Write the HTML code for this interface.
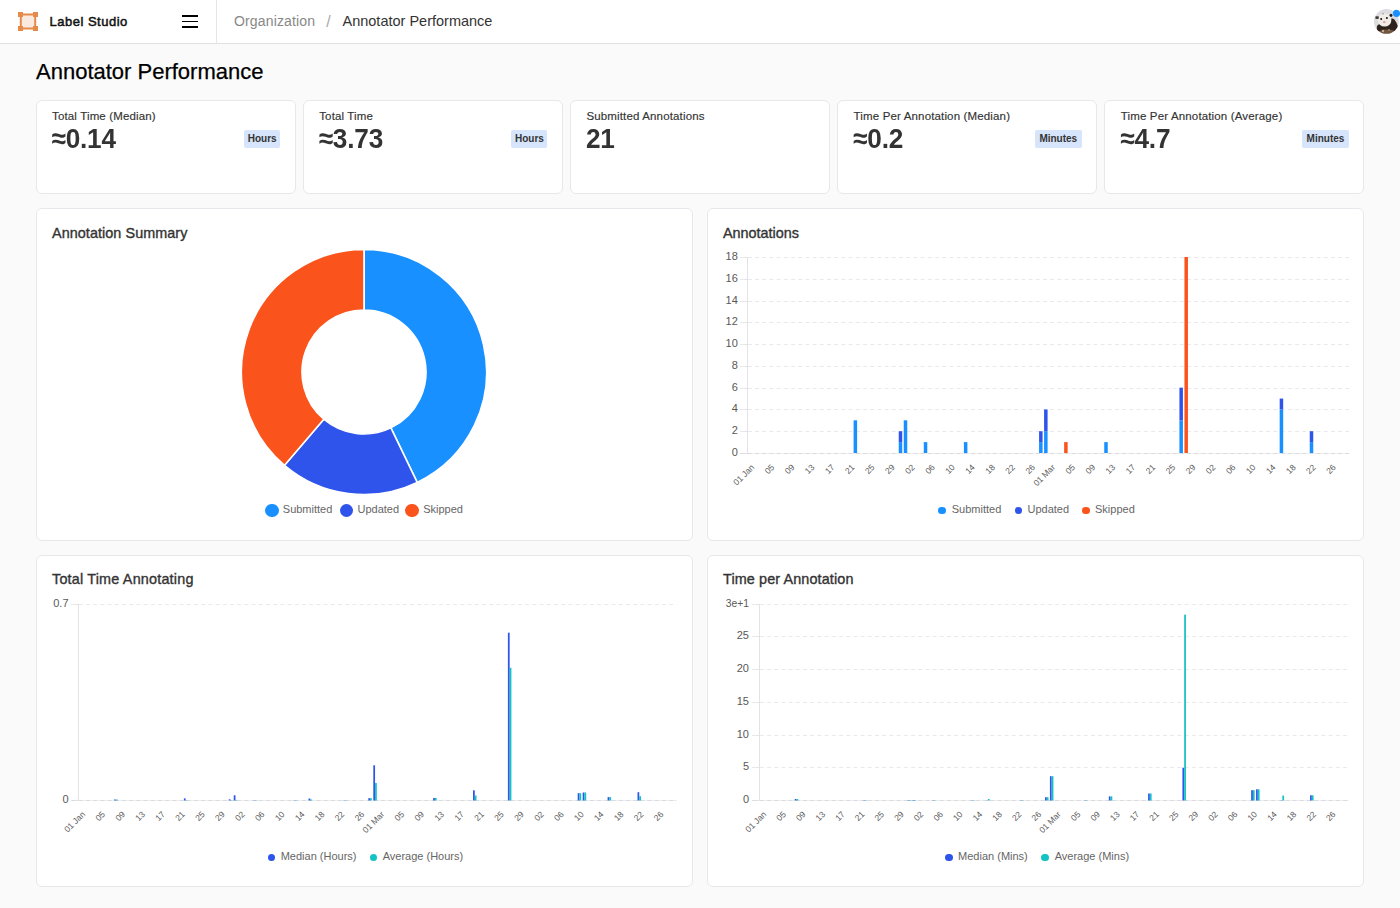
<!DOCTYPE html>
<html><head><meta charset="utf-8">
<style>
*{box-sizing:border-box}
html,body{margin:0;padding:0}
body{width:1400px;height:908px;overflow:hidden;background:#fafafa;font-family:"Liberation Sans",sans-serif;position:relative;color:#333}
.abs{position:absolute;white-space:nowrap}
#hdr{position:absolute;left:0;top:0;width:1400px;height:44px;background:#fff;border-bottom:1px solid #e1e1e1}
#sep{position:absolute;left:216px;top:0;width:1px;height:43px;background:#e6e6e6}
.card{position:absolute;background:#fff;border:1px solid #e8e8ec;border-radius:6px}
.stl{font-size:11.5px;letter-spacing:0.15px;color:#333;line-height:14px;-webkit-text-stroke:0.15px #333}
.sval{font-size:26.2px;font-weight:700;color:#333;line-height:30px;letter-spacing:-0.2px;transform:scaleY(1.07);transform-origin:0 24.1px}
.badge{position:absolute;height:18px;background:#d6e4fc;border-radius:2px;font-size:10px;font-weight:700;color:#333;line-height:18px;text-align:center}
.ctitle{font-size:14.4px;font-weight:400;color:#333;line-height:16px;-webkit-text-stroke:0.35px #333}
.leg{font-size:11px;color:#666;line-height:13px}
svg{position:absolute;left:0;top:0;overflow:visible}
</style></head>
<body>
<div id="hdr">
  <svg width="22" height="22" style="left:17px;top:11px" viewBox="0 0 22 22">
    <rect x="3.8" y="3.5" width="14.4" height="14" fill="#f9e9de" stroke="#e68a4a" stroke-width="2"/>
    <rect x="1" y="1" width="5" height="5" fill="#e68a4a"/>
    <rect x="16" y="1" width="5" height="5" fill="#e68a4a"/>
    <rect x="1" y="15" width="5" height="5" fill="#e68a4a"/>
    <rect x="16" y="15" width="5" height="5" fill="#e68a4a"/>
  </svg>
  <div class="abs" style="left:49.5px;top:14px;font-size:13px;letter-spacing:0.5px;font-weight:400;color:#111;line-height:16px;-webkit-text-stroke:0.5px #111">Label Studio</div>
  <div class="abs" style="left:182px;top:15px;width:16px;height:2px;background:#000"></div>
  <div class="abs" style="left:182px;top:21px;width:16px;height:1px;background:#000"></div>
  <div class="abs" style="left:182px;top:26px;width:16px;height:2px;background:#000"></div>
  <div id="sep"></div>
  <div class="abs" style="left:234px;top:13px;font-size:14px;letter-spacing:0.15px;color:#888;line-height:16px">Organization</div>
  <div class="abs" style="left:326.2px;top:13.3px;font-size:16px;color:#aaa;line-height:18px">/</div>
  <div class="abs" style="left:342.5px;top:13px;font-size:14.5px;color:#333;line-height:16px">Annotator Performance</div>
  <svg width="26" height="26" style="left:1374px;top:9px" viewBox="0 0 26 26">
    <defs><clipPath id="avc"><circle cx="12.4" cy="12.45" r="12.4"/></clipPath>
    <filter id="blr" x="-20%" y="-20%" width="140%" height="140%"><feGaussianBlur stdDeviation="0.45"/></filter></defs>
    <g clip-path="url(#avc)">
      <rect x="0" y="0" width="26" height="26" fill="#dcdce1"/>
      <g filter="url(#blr)">
      <path d="M3,17 C6,13 14,13 17,10 C20,8 23,14 24,18 L24,26 L2,26 Z" fill="#2e231c"/>
      <ellipse cx="13" cy="23.5" rx="9" ry="3" fill="#6e5640"/>
      <circle cx="9" cy="22" r="1.2" fill="#c9a98a"/>
      <circle cx="15" cy="21" r="0.9" fill="#a8876a"/>
      <ellipse cx="10.6" cy="11" rx="6.8" ry="6.6" fill="#f0ede6"/>
      <rect x="1.5" y="7.3" width="3.2" height="2.6" fill="#3a3838"/>
      <ellipse cx="17" cy="6.3" rx="1.4" ry="1.6" fill="#1c1a1a"/>
      <circle cx="9" cy="4.8" r="0.6" fill="#5a4a3e"/>
      <circle cx="7.2" cy="10.1" r="1" fill="#1a1010"/>
      <circle cx="12.9" cy="9" r="1" fill="#1a1010"/>
      <ellipse cx="10.3" cy="13.2" rx="1.4" ry="1.1" fill="#e2a3a8"/>
      </g>
    </g>
    <circle cx="22.5" cy="4.3" r="3.6" fill="#1890ff"/>
  </svg>
</div>

<div class="abs" style="left:36px;top:59px;font-size:22px;color:#000;line-height:26px;-webkit-text-stroke:0.25px #000">Annotator Performance</div>

<!-- stat cards -->
<div class="card" style="left:36px;top:100px;width:260px;height:94px"></div>
<div class="card" style="left:303px;top:100px;width:260px;height:94px"></div>
<div class="card" style="left:570px;top:100px;width:260px;height:94px"></div>
<div class="card" style="left:837px;top:100px;width:260px;height:94px"></div>
<div class="card" style="left:1104px;top:100px;width:260px;height:94px"></div>

<!-- stat content -->
<div class="abs stl" style="left:52.0px;top:109px">Total Time (Median)</div>
<div class="abs sval" style="left:51.5px;top:124px">≈0.14</div>
<div class="badge" style="left:244.2px;top:130px;width:36px">Hours</div>
<div class="abs stl" style="left:319.2px;top:109px">Total Time</div>
<div class="abs sval" style="left:318.7px;top:124px">≈3.73</div>
<div class="badge" style="left:511.4px;top:130px;width:36px">Hours</div>
<div class="abs stl" style="left:586.4px;top:109px">Submitted Annotations</div>
<div class="abs sval" style="left:585.9px;top:124px">21</div>
<div class="abs stl" style="left:853.6px;top:109px">Time Per Annotation (Median)</div>
<div class="abs sval" style="left:853.1px;top:124px">≈0.2</div>
<div class="badge" style="left:1034.8px;top:130px;width:47px">Minutes</div>
<div class="abs stl" style="left:1120.8px;top:109px">Time Per Annotation (Average)</div>
<div class="abs sval" style="left:1120.3px;top:124px">≈4.7</div>
<div class="badge" style="left:1302.0px;top:130px;width:47px">Minutes</div>

<!-- chart cards -->
<div class="card" style="left:36px;top:208px;width:657px;height:333px"></div>
<div class="card" style="left:707px;top:208px;width:657px;height:333px"></div>
<div class="card" style="left:36px;top:555px;width:657px;height:332px"></div>
<div class="card" style="left:707px;top:555px;width:657px;height:332px"></div>

<!-- chart titles/legends -->
<div class="abs ctitle" style="left:52px;top:225px;letter-spacing:0.06px">Annotation Summary</div>
<div class="abs ctitle" style="left:723px;top:225px">Annotations</div>
<div class="abs ctitle" style="left:52px;top:571px;letter-spacing:0.19px">Total Time Annotating</div>
<div class="abs ctitle" style="left:723px;top:571px;letter-spacing:0.12px">Time per Annotation</div>

<div class="abs" style="left:265.2px;top:503.5px;width:13.5px;height:13.5px;border-radius:50%;background:#1890ff"></div>
<div class="abs leg" style="left:282.8px;top:503px">Submitted</div>
<div class="abs" style="left:339.7px;top:503.5px;width:13.5px;height:13.5px;border-radius:50%;background:#2f54eb"></div>
<div class="abs leg" style="left:357.5px;top:503px">Updated</div>
<div class="abs" style="left:405.4px;top:503.5px;width:13.5px;height:13.5px;border-radius:50%;background:#fa541c"></div>
<div class="abs leg" style="left:423.2px;top:503px">Skipped</div>

<div class="abs" style="left:938.25px;top:506.5px;width:7.5px;height:7.5px;border-radius:50%;background:#1890ff"></div>
<div class="abs leg" style="left:951.75px;top:503px">Submitted</div>
<div class="abs" style="left:1014.75px;top:506.5px;width:7.5px;height:7.5px;border-radius:50%;background:#2f54eb"></div>
<div class="abs leg" style="left:1027.5px;top:503px">Updated</div>
<div class="abs" style="left:1082.25px;top:506.5px;width:7.5px;height:7.5px;border-radius:50%;background:#fa541c"></div>
<div class="abs leg" style="left:1095px;top:503px">Skipped</div>

<div class="abs" style="left:267.5px;top:853.7px;width:7.5px;height:7.5px;border-radius:50%;background:#2f54eb"></div>
<div class="abs leg" style="left:280.7px;top:850px">Median (Hours)</div>
<div class="abs" style="left:369.5px;top:853.7px;width:7.5px;height:7.5px;border-radius:50%;background:#13c2c2"></div>
<div class="abs leg" style="left:382.7px;top:850px">Average (Hours)</div>

<div class="abs" style="left:945px;top:853.8px;width:7.5px;height:7.5px;border-radius:50%;background:#2f54eb"></div>
<div class="abs leg" style="left:958.1px;top:850px">Median (Mins)</div>
<div class="abs" style="left:1041.4px;top:853.8px;width:7.5px;height:7.5px;border-radius:50%;background:#13c2c2"></div>
<div class="abs leg" style="left:1054.7px;top:850px">Average (Mins)</div>

<!-- CHARTS -->
<svg width="1400" height="908" viewBox="0 0 1400 908" style="left:0;top:0;font-family:'Liberation Sans',sans-serif">
<path d="M364.00,249.40 A122.6,122.6 0 0 1 417.19,482.46 L390.90,427.86 A62.0,62.0 0 0 0 364.00,310.00 Z" fill="#1890ff" stroke="#fff" stroke-width="1.6" stroke-linejoin="round"/>
<path d="M417.19,482.46 A122.6,122.6 0 0 1 284.53,465.35 L323.81,419.21 A62.0,62.0 0 0 0 390.90,427.86 Z" fill="#2f54eb" stroke="#fff" stroke-width="1.6" stroke-linejoin="round"/>
<path d="M284.53,465.35 A122.6,122.6 0 0 1 364.00,249.40 L364.00,310.00 A62.0,62.0 0 0 0 323.81,419.21 Z" fill="#fa541c" stroke="#fff" stroke-width="1.6" stroke-linejoin="round"/>
<line x1="740" y1="453.5" x2="747" y2="453.5" stroke="#e3e3e7" stroke-width="1"/>
<line x1="747" y1="453.5" x2="1349.1" y2="453.5" stroke="#eeeef1" stroke-width="1"/>
<line x1="740.6" y1="453.5" x2="1349.1" y2="453.5" stroke="#dbdbdf" stroke-width="1" stroke-dasharray="4 3.2"/>
<text x="737.8" y="456.2" text-anchor="end" font-size="11" fill="#595959">0</text>
<line x1="740" y1="431.5" x2="747" y2="431.5" stroke="#e3e3e7" stroke-width="1"/>
<line x1="740.6" y1="431.5" x2="1349.1" y2="431.5" stroke="#e9e9ed" stroke-width="1" stroke-dasharray="4 3.2"/>
<text x="737.8" y="434.2" text-anchor="end" font-size="11" fill="#595959">2</text>
<line x1="740" y1="409.5" x2="747" y2="409.5" stroke="#e3e3e7" stroke-width="1"/>
<line x1="740.6" y1="409.5" x2="1349.1" y2="409.5" stroke="#e9e9ed" stroke-width="1" stroke-dasharray="4 3.2"/>
<text x="737.8" y="412.2" text-anchor="end" font-size="11" fill="#595959">4</text>
<line x1="740" y1="388.5" x2="747" y2="388.5" stroke="#e3e3e7" stroke-width="1"/>
<line x1="740.6" y1="388.5" x2="1349.1" y2="388.5" stroke="#e9e9ed" stroke-width="1" stroke-dasharray="4 3.2"/>
<text x="737.8" y="391.2" text-anchor="end" font-size="11" fill="#595959">6</text>
<line x1="740" y1="366.5" x2="747" y2="366.5" stroke="#e3e3e7" stroke-width="1"/>
<line x1="740.6" y1="366.5" x2="1349.1" y2="366.5" stroke="#e9e9ed" stroke-width="1" stroke-dasharray="4 3.2"/>
<text x="737.8" y="369.2" text-anchor="end" font-size="11" fill="#595959">8</text>
<line x1="740" y1="344.5" x2="747" y2="344.5" stroke="#e3e3e7" stroke-width="1"/>
<line x1="740.6" y1="344.5" x2="1349.1" y2="344.5" stroke="#e9e9ed" stroke-width="1" stroke-dasharray="4 3.2"/>
<text x="737.8" y="347.2" text-anchor="end" font-size="11" fill="#595959">10</text>
<line x1="740" y1="322.5" x2="747" y2="322.5" stroke="#e3e3e7" stroke-width="1"/>
<line x1="740.6" y1="322.5" x2="1349.1" y2="322.5" stroke="#e9e9ed" stroke-width="1" stroke-dasharray="4 3.2"/>
<text x="737.8" y="325.2" text-anchor="end" font-size="11" fill="#595959">12</text>
<line x1="740" y1="301.5" x2="747" y2="301.5" stroke="#e3e3e7" stroke-width="1"/>
<line x1="740.6" y1="301.5" x2="1349.1" y2="301.5" stroke="#e9e9ed" stroke-width="1" stroke-dasharray="4 3.2"/>
<text x="737.8" y="304.2" text-anchor="end" font-size="11" fill="#595959">14</text>
<line x1="740" y1="279.5" x2="747" y2="279.5" stroke="#e3e3e7" stroke-width="1"/>
<line x1="740.6" y1="279.5" x2="1349.1" y2="279.5" stroke="#e9e9ed" stroke-width="1" stroke-dasharray="4 3.2"/>
<text x="737.8" y="282.2" text-anchor="end" font-size="11" fill="#595959">16</text>
<line x1="740" y1="257.5" x2="747" y2="257.5" stroke="#e3e3e7" stroke-width="1"/>
<line x1="740.6" y1="257.5" x2="1349.1" y2="257.5" stroke="#e9e9ed" stroke-width="1" stroke-dasharray="4 3.2"/>
<text x="737.8" y="260.2" text-anchor="end" font-size="11" fill="#595959">18</text>
<line x1="747.5" y1="257" x2="747.5" y2="454" stroke="#e3e3e7" stroke-width="1"/>
<rect x="853.61" y="420.33" width="3.5" height="32.67" fill="#1890ff"/>
<rect x="898.73" y="442.11" width="3.5" height="10.89" fill="#1890ff"/>
<rect x="898.73" y="431.22" width="3.5" height="10.89" fill="#2f54eb"/>
<rect x="903.74" y="420.33" width="3.5" height="32.67" fill="#1890ff"/>
<rect x="923.79" y="442.11" width="3.5" height="10.89" fill="#1890ff"/>
<rect x="963.89" y="442.11" width="3.5" height="10.89" fill="#1890ff"/>
<rect x="1039.08" y="442.11" width="3.5" height="10.89" fill="#1890ff"/>
<rect x="1039.08" y="431.22" width="3.5" height="10.89" fill="#2f54eb"/>
<rect x="1044.09" y="431.22" width="3.5" height="21.78" fill="#1890ff"/>
<rect x="1044.09" y="409.44" width="3.5" height="21.78" fill="#2f54eb"/>
<rect x="1064.14" y="442.11" width="3.5" height="10.89" fill="#fa541c"/>
<rect x="1104.24" y="442.11" width="3.5" height="10.89" fill="#1890ff"/>
<rect x="1179.42" y="420.33" width="3.5" height="32.67" fill="#1890ff"/>
<rect x="1179.42" y="387.67" width="3.5" height="32.67" fill="#2f54eb"/>
<rect x="1184.44" y="257.00" width="3.5" height="196.00" fill="#fa541c"/>
<rect x="1279.68" y="409.44" width="3.5" height="43.56" fill="#1890ff"/>
<rect x="1279.68" y="398.56" width="3.5" height="10.89" fill="#2f54eb"/>
<rect x="1309.75" y="442.11" width="3.5" height="10.89" fill="#1890ff"/>
<rect x="1309.75" y="431.22" width="3.5" height="10.89" fill="#2f54eb"/>
<text x="754.90" y="467.80" text-anchor="end" font-size="8.5" fill="#595959" transform="rotate(-45 754.90 467.80)">01 Jan</text>
<text x="774.95" y="467.80" text-anchor="end" font-size="8.5" fill="#595959" transform="rotate(-45 774.95 467.80)">05</text>
<text x="795.00" y="467.80" text-anchor="end" font-size="8.5" fill="#595959" transform="rotate(-45 795.00 467.80)">09</text>
<text x="815.05" y="467.80" text-anchor="end" font-size="8.5" fill="#595959" transform="rotate(-45 815.05 467.80)">13</text>
<text x="835.10" y="467.80" text-anchor="end" font-size="8.5" fill="#595959" transform="rotate(-45 835.10 467.80)">17</text>
<text x="855.15" y="467.80" text-anchor="end" font-size="8.5" fill="#595959" transform="rotate(-45 855.15 467.80)">21</text>
<text x="875.20" y="467.80" text-anchor="end" font-size="8.5" fill="#595959" transform="rotate(-45 875.20 467.80)">25</text>
<text x="895.25" y="467.80" text-anchor="end" font-size="8.5" fill="#595959" transform="rotate(-45 895.25 467.80)">29</text>
<text x="915.30" y="467.80" text-anchor="end" font-size="8.5" fill="#595959" transform="rotate(-45 915.30 467.80)">02</text>
<text x="935.35" y="467.80" text-anchor="end" font-size="8.5" fill="#595959" transform="rotate(-45 935.35 467.80)">06</text>
<text x="955.40" y="467.80" text-anchor="end" font-size="8.5" fill="#595959" transform="rotate(-45 955.40 467.80)">10</text>
<text x="975.45" y="467.80" text-anchor="end" font-size="8.5" fill="#595959" transform="rotate(-45 975.45 467.80)">14</text>
<text x="995.50" y="467.80" text-anchor="end" font-size="8.5" fill="#595959" transform="rotate(-45 995.50 467.80)">18</text>
<text x="1015.55" y="467.80" text-anchor="end" font-size="8.5" fill="#595959" transform="rotate(-45 1015.55 467.80)">22</text>
<text x="1035.60" y="467.80" text-anchor="end" font-size="8.5" fill="#595959" transform="rotate(-45 1035.60 467.80)">26</text>
<text x="1055.65" y="467.80" text-anchor="end" font-size="8.5" fill="#595959" transform="rotate(-45 1055.65 467.80)">01 Mar</text>
<text x="1075.70" y="467.80" text-anchor="end" font-size="8.5" fill="#595959" transform="rotate(-45 1075.70 467.80)">05</text>
<text x="1095.75" y="467.80" text-anchor="end" font-size="8.5" fill="#595959" transform="rotate(-45 1095.75 467.80)">09</text>
<text x="1115.80" y="467.80" text-anchor="end" font-size="8.5" fill="#595959" transform="rotate(-45 1115.80 467.80)">13</text>
<text x="1135.85" y="467.80" text-anchor="end" font-size="8.5" fill="#595959" transform="rotate(-45 1135.85 467.80)">17</text>
<text x="1155.90" y="467.80" text-anchor="end" font-size="8.5" fill="#595959" transform="rotate(-45 1155.90 467.80)">21</text>
<text x="1175.95" y="467.80" text-anchor="end" font-size="8.5" fill="#595959" transform="rotate(-45 1175.95 467.80)">25</text>
<text x="1196.00" y="467.80" text-anchor="end" font-size="8.5" fill="#595959" transform="rotate(-45 1196.00 467.80)">29</text>
<text x="1216.05" y="467.80" text-anchor="end" font-size="8.5" fill="#595959" transform="rotate(-45 1216.05 467.80)">02</text>
<text x="1236.10" y="467.80" text-anchor="end" font-size="8.5" fill="#595959" transform="rotate(-45 1236.10 467.80)">06</text>
<text x="1256.15" y="467.80" text-anchor="end" font-size="8.5" fill="#595959" transform="rotate(-45 1256.15 467.80)">10</text>
<text x="1276.20" y="467.80" text-anchor="end" font-size="8.5" fill="#595959" transform="rotate(-45 1276.20 467.80)">14</text>
<text x="1296.25" y="467.80" text-anchor="end" font-size="8.5" fill="#595959" transform="rotate(-45 1296.25 467.80)">18</text>
<text x="1316.30" y="467.80" text-anchor="end" font-size="8.5" fill="#595959" transform="rotate(-45 1316.30 467.80)">22</text>
<text x="1336.35" y="467.80" text-anchor="end" font-size="8.5" fill="#595959" transform="rotate(-45 1336.35 467.80)">26</text>
<line x1="71" y1="800.5" x2="78" y2="800.5" stroke="#e3e3e7" stroke-width="1"/>
<line x1="78" y1="800.5" x2="676.7" y2="800.5" stroke="#eeeef1" stroke-width="1"/>
<line x1="71.6" y1="800.5" x2="676.7" y2="800.5" stroke="#dbdbdf" stroke-width="1" stroke-dasharray="4 3.2"/>
<text x="68.5" y="803.2" text-anchor="end" font-size="11" fill="#595959">0</text>
<line x1="71" y1="604.5" x2="78" y2="604.5" stroke="#e3e3e7" stroke-width="1"/>
<line x1="71.6" y1="604.5" x2="676.7" y2="604.5" stroke="#e9e9ed" stroke-width="1" stroke-dasharray="4 3.2"/>
<text x="68.5" y="607.2" text-anchor="end" font-size="11" fill="#595959">0.7</text>
<line x1="78.5" y1="604" x2="78.5" y2="801" stroke="#e3e3e7" stroke-width="1"/>
<rect x="114.09" y="799.50" width="1.75" height="1.00" fill="#2f54eb"/>
<rect x="115.84" y="799.50" width="1.75" height="1.00" fill="#13c2c2"/>
<rect x="183.88" y="798.40" width="1.75" height="2.10" fill="#2f54eb"/>
<rect x="185.63" y="800.10" width="1.75" height="0.40" fill="#13c2c2"/>
<rect x="228.74" y="799.30" width="1.75" height="1.20" fill="#2f54eb"/>
<rect x="230.49" y="800.20" width="1.75" height="0.30" fill="#13c2c2"/>
<rect x="233.73" y="795.30" width="1.75" height="5.20" fill="#2f54eb"/>
<rect x="235.48" y="799.90" width="1.75" height="0.60" fill="#13c2c2"/>
<rect x="253.67" y="800.20" width="1.75" height="0.30" fill="#2f54eb"/>
<rect x="255.42" y="800.20" width="1.75" height="0.30" fill="#13c2c2"/>
<rect x="293.55" y="800.20" width="1.75" height="0.30" fill="#2f54eb"/>
<rect x="295.30" y="800.20" width="1.75" height="0.30" fill="#13c2c2"/>
<rect x="308.50" y="798.50" width="1.75" height="2.00" fill="#2f54eb"/>
<rect x="310.25" y="799.50" width="1.75" height="1.00" fill="#13c2c2"/>
<rect x="343.40" y="800.20" width="1.75" height="0.30" fill="#2f54eb"/>
<rect x="345.15" y="800.20" width="1.75" height="0.30" fill="#13c2c2"/>
<rect x="368.32" y="798.20" width="1.75" height="2.30" fill="#2f54eb"/>
<rect x="370.07" y="798.20" width="1.75" height="2.30" fill="#13c2c2"/>
<rect x="373.31" y="765.30" width="1.75" height="35.20" fill="#2f54eb"/>
<rect x="375.06" y="783.00" width="1.75" height="17.50" fill="#13c2c2"/>
<rect x="433.13" y="798.00" width="1.75" height="2.50" fill="#2f54eb"/>
<rect x="434.88" y="798.00" width="1.75" height="2.50" fill="#13c2c2"/>
<rect x="473.01" y="790.30" width="1.75" height="10.20" fill="#2f54eb"/>
<rect x="474.76" y="795.50" width="1.75" height="5.00" fill="#13c2c2"/>
<rect x="507.90" y="632.70" width="1.75" height="167.80" fill="#2f54eb"/>
<rect x="509.65" y="667.80" width="1.75" height="132.70" fill="#13c2c2"/>
<rect x="577.69" y="793.20" width="1.75" height="7.30" fill="#2f54eb"/>
<rect x="579.44" y="793.20" width="1.75" height="7.30" fill="#13c2c2"/>
<rect x="582.68" y="792.50" width="1.75" height="8.00" fill="#2f54eb"/>
<rect x="584.43" y="792.50" width="1.75" height="8.00" fill="#13c2c2"/>
<rect x="607.60" y="797.10" width="1.75" height="3.40" fill="#2f54eb"/>
<rect x="609.35" y="797.10" width="1.75" height="3.40" fill="#13c2c2"/>
<rect x="637.51" y="792.20" width="1.75" height="8.30" fill="#2f54eb"/>
<rect x="639.26" y="796.20" width="1.75" height="4.30" fill="#13c2c2"/>
<text x="85.74" y="814.80" text-anchor="end" font-size="8.5" fill="#595959" transform="rotate(-45 85.74 814.80)">01 Jan</text>
<text x="105.68" y="814.80" text-anchor="end" font-size="8.5" fill="#595959" transform="rotate(-45 105.68 814.80)">05</text>
<text x="125.62" y="814.80" text-anchor="end" font-size="8.5" fill="#595959" transform="rotate(-45 125.62 814.80)">09</text>
<text x="145.56" y="814.80" text-anchor="end" font-size="8.5" fill="#595959" transform="rotate(-45 145.56 814.80)">13</text>
<text x="165.50" y="814.80" text-anchor="end" font-size="8.5" fill="#595959" transform="rotate(-45 165.50 814.80)">17</text>
<text x="185.44" y="814.80" text-anchor="end" font-size="8.5" fill="#595959" transform="rotate(-45 185.44 814.80)">21</text>
<text x="205.38" y="814.80" text-anchor="end" font-size="8.5" fill="#595959" transform="rotate(-45 205.38 814.80)">25</text>
<text x="225.32" y="814.80" text-anchor="end" font-size="8.5" fill="#595959" transform="rotate(-45 225.32 814.80)">29</text>
<text x="245.26" y="814.80" text-anchor="end" font-size="8.5" fill="#595959" transform="rotate(-45 245.26 814.80)">02</text>
<text x="265.20" y="814.80" text-anchor="end" font-size="8.5" fill="#595959" transform="rotate(-45 265.20 814.80)">06</text>
<text x="285.14" y="814.80" text-anchor="end" font-size="8.5" fill="#595959" transform="rotate(-45 285.14 814.80)">10</text>
<text x="305.08" y="814.80" text-anchor="end" font-size="8.5" fill="#595959" transform="rotate(-45 305.08 814.80)">14</text>
<text x="325.02" y="814.80" text-anchor="end" font-size="8.5" fill="#595959" transform="rotate(-45 325.02 814.80)">18</text>
<text x="344.96" y="814.80" text-anchor="end" font-size="8.5" fill="#595959" transform="rotate(-45 344.96 814.80)">22</text>
<text x="364.90" y="814.80" text-anchor="end" font-size="8.5" fill="#595959" transform="rotate(-45 364.90 814.80)">26</text>
<text x="384.84" y="814.80" text-anchor="end" font-size="8.5" fill="#595959" transform="rotate(-45 384.84 814.80)">01 Mar</text>
<text x="404.78" y="814.80" text-anchor="end" font-size="8.5" fill="#595959" transform="rotate(-45 404.78 814.80)">05</text>
<text x="424.72" y="814.80" text-anchor="end" font-size="8.5" fill="#595959" transform="rotate(-45 424.72 814.80)">09</text>
<text x="444.66" y="814.80" text-anchor="end" font-size="8.5" fill="#595959" transform="rotate(-45 444.66 814.80)">13</text>
<text x="464.60" y="814.80" text-anchor="end" font-size="8.5" fill="#595959" transform="rotate(-45 464.60 814.80)">17</text>
<text x="484.54" y="814.80" text-anchor="end" font-size="8.5" fill="#595959" transform="rotate(-45 484.54 814.80)">21</text>
<text x="504.48" y="814.80" text-anchor="end" font-size="8.5" fill="#595959" transform="rotate(-45 504.48 814.80)">25</text>
<text x="524.42" y="814.80" text-anchor="end" font-size="8.5" fill="#595959" transform="rotate(-45 524.42 814.80)">29</text>
<text x="544.36" y="814.80" text-anchor="end" font-size="8.5" fill="#595959" transform="rotate(-45 544.36 814.80)">02</text>
<text x="564.30" y="814.80" text-anchor="end" font-size="8.5" fill="#595959" transform="rotate(-45 564.30 814.80)">06</text>
<text x="584.24" y="814.80" text-anchor="end" font-size="8.5" fill="#595959" transform="rotate(-45 584.24 814.80)">10</text>
<text x="604.18" y="814.80" text-anchor="end" font-size="8.5" fill="#595959" transform="rotate(-45 604.18 814.80)">14</text>
<text x="624.12" y="814.80" text-anchor="end" font-size="8.5" fill="#595959" transform="rotate(-45 624.12 814.80)">18</text>
<text x="644.06" y="814.80" text-anchor="end" font-size="8.5" fill="#595959" transform="rotate(-45 644.06 814.80)">22</text>
<text x="664.00" y="814.80" text-anchor="end" font-size="8.5" fill="#595959" transform="rotate(-45 664.00 814.80)">26</text>
<line x1="752" y1="800.5" x2="759" y2="800.5" stroke="#e3e3e7" stroke-width="1"/>
<line x1="759" y1="800.5" x2="1348.6" y2="800.5" stroke="#eeeef1" stroke-width="1"/>
<line x1="752.6" y1="800.5" x2="1348.6" y2="800.5" stroke="#dbdbdf" stroke-width="1" stroke-dasharray="4 3.2"/>
<text x="749" y="803.2" text-anchor="end" font-size="11" fill="#595959">0</text>
<line x1="752" y1="767.5" x2="759" y2="767.5" stroke="#e3e3e7" stroke-width="1"/>
<line x1="752.6" y1="767.5" x2="1348.6" y2="767.5" stroke="#e9e9ed" stroke-width="1" stroke-dasharray="4 3.2"/>
<text x="749" y="770.2" text-anchor="end" font-size="11" fill="#595959">5</text>
<line x1="752" y1="735.5" x2="759" y2="735.5" stroke="#e3e3e7" stroke-width="1"/>
<line x1="752.6" y1="735.5" x2="1348.6" y2="735.5" stroke="#e9e9ed" stroke-width="1" stroke-dasharray="4 3.2"/>
<text x="749" y="738.2" text-anchor="end" font-size="11" fill="#595959">10</text>
<line x1="752" y1="702.5" x2="759" y2="702.5" stroke="#e3e3e7" stroke-width="1"/>
<line x1="752.6" y1="702.5" x2="1348.6" y2="702.5" stroke="#e9e9ed" stroke-width="1" stroke-dasharray="4 3.2"/>
<text x="749" y="705.2" text-anchor="end" font-size="11" fill="#595959">15</text>
<line x1="752" y1="669.5" x2="759" y2="669.5" stroke="#e3e3e7" stroke-width="1"/>
<line x1="752.6" y1="669.5" x2="1348.6" y2="669.5" stroke="#e9e9ed" stroke-width="1" stroke-dasharray="4 3.2"/>
<text x="749" y="672.2" text-anchor="end" font-size="11" fill="#595959">20</text>
<line x1="752" y1="636.5" x2="759" y2="636.5" stroke="#e3e3e7" stroke-width="1"/>
<line x1="752.6" y1="636.5" x2="1348.6" y2="636.5" stroke="#e9e9ed" stroke-width="1" stroke-dasharray="4 3.2"/>
<text x="749" y="639.2" text-anchor="end" font-size="11" fill="#595959">25</text>
<line x1="752" y1="604.5" x2="759" y2="604.5" stroke="#e3e3e7" stroke-width="1"/>
<line x1="752.6" y1="604.5" x2="1348.6" y2="604.5" stroke="#e9e9ed" stroke-width="1" stroke-dasharray="4 3.2"/>
<text x="749" y="607.2" text-anchor="end" font-size="10.3" fill="#595959">3e+1</text>
<line x1="759.5" y1="604" x2="759.5" y2="801" stroke="#e3e3e7" stroke-width="1"/>
<rect x="794.71" y="799.00" width="1.75" height="1.50" fill="#2f54eb"/>
<rect x="796.46" y="799.00" width="1.75" height="1.50" fill="#13c2c2"/>
<rect x="863.42" y="800.10" width="1.75" height="0.40" fill="#2f54eb"/>
<rect x="865.17" y="800.10" width="1.75" height="0.40" fill="#13c2c2"/>
<rect x="907.59" y="800.00" width="1.75" height="0.50" fill="#2f54eb"/>
<rect x="909.34" y="800.00" width="1.75" height="0.50" fill="#13c2c2"/>
<rect x="912.50" y="800.00" width="1.75" height="0.50" fill="#2f54eb"/>
<rect x="914.25" y="800.00" width="1.75" height="0.50" fill="#13c2c2"/>
<rect x="932.13" y="800.20" width="1.75" height="0.30" fill="#2f54eb"/>
<rect x="933.88" y="800.20" width="1.75" height="0.30" fill="#13c2c2"/>
<rect x="971.40" y="800.20" width="1.75" height="0.30" fill="#2f54eb"/>
<rect x="973.15" y="800.20" width="1.75" height="0.30" fill="#13c2c2"/>
<rect x="986.12" y="800.30" width="1.75" height="0.20" fill="#2f54eb"/>
<rect x="987.87" y="799.00" width="1.75" height="1.50" fill="#13c2c2"/>
<rect x="1020.48" y="800.20" width="1.75" height="0.30" fill="#2f54eb"/>
<rect x="1022.23" y="800.20" width="1.75" height="0.30" fill="#13c2c2"/>
<rect x="1045.02" y="797.20" width="1.75" height="3.30" fill="#2f54eb"/>
<rect x="1046.77" y="797.20" width="1.75" height="3.30" fill="#13c2c2"/>
<rect x="1049.93" y="776.20" width="1.75" height="24.30" fill="#2f54eb"/>
<rect x="1051.68" y="776.20" width="1.75" height="24.30" fill="#13c2c2"/>
<rect x="1084.28" y="800.20" width="1.75" height="0.30" fill="#2f54eb"/>
<rect x="1086.03" y="800.20" width="1.75" height="0.30" fill="#13c2c2"/>
<rect x="1108.82" y="796.40" width="1.75" height="4.10" fill="#2f54eb"/>
<rect x="1110.57" y="796.40" width="1.75" height="4.10" fill="#13c2c2"/>
<rect x="1148.09" y="793.50" width="1.75" height="7.00" fill="#2f54eb"/>
<rect x="1149.84" y="793.50" width="1.75" height="7.00" fill="#13c2c2"/>
<rect x="1182.44" y="767.70" width="1.75" height="32.80" fill="#2f54eb"/>
<rect x="1184.19" y="614.70" width="1.75" height="185.80" fill="#13c2c2"/>
<rect x="1251.15" y="790.20" width="1.75" height="10.30" fill="#2f54eb"/>
<rect x="1252.90" y="790.20" width="1.75" height="10.30" fill="#13c2c2"/>
<rect x="1256.06" y="789.30" width="1.75" height="11.20" fill="#2f54eb"/>
<rect x="1257.81" y="789.30" width="1.75" height="11.20" fill="#13c2c2"/>
<rect x="1280.60" y="800.20" width="1.75" height="0.30" fill="#2f54eb"/>
<rect x="1282.35" y="795.60" width="1.75" height="4.90" fill="#13c2c2"/>
<rect x="1310.05" y="795.30" width="1.75" height="5.20" fill="#2f54eb"/>
<rect x="1311.80" y="795.30" width="1.75" height="5.20" fill="#13c2c2"/>
<text x="766.90" y="814.80" text-anchor="end" font-size="8.5" fill="#595959" transform="rotate(-45 766.90 814.80)">01 Jan</text>
<text x="786.54" y="814.80" text-anchor="end" font-size="8.5" fill="#595959" transform="rotate(-45 786.54 814.80)">05</text>
<text x="806.17" y="814.80" text-anchor="end" font-size="8.5" fill="#595959" transform="rotate(-45 806.17 814.80)">09</text>
<text x="825.80" y="814.80" text-anchor="end" font-size="8.5" fill="#595959" transform="rotate(-45 825.80 814.80)">13</text>
<text x="845.43" y="814.80" text-anchor="end" font-size="8.5" fill="#595959" transform="rotate(-45 845.43 814.80)">17</text>
<text x="865.06" y="814.80" text-anchor="end" font-size="8.5" fill="#595959" transform="rotate(-45 865.06 814.80)">21</text>
<text x="884.70" y="814.80" text-anchor="end" font-size="8.5" fill="#595959" transform="rotate(-45 884.70 814.80)">25</text>
<text x="904.33" y="814.80" text-anchor="end" font-size="8.5" fill="#595959" transform="rotate(-45 904.33 814.80)">29</text>
<text x="923.96" y="814.80" text-anchor="end" font-size="8.5" fill="#595959" transform="rotate(-45 923.96 814.80)">02</text>
<text x="943.59" y="814.80" text-anchor="end" font-size="8.5" fill="#595959" transform="rotate(-45 943.59 814.80)">06</text>
<text x="963.22" y="814.80" text-anchor="end" font-size="8.5" fill="#595959" transform="rotate(-45 963.22 814.80)">10</text>
<text x="982.86" y="814.80" text-anchor="end" font-size="8.5" fill="#595959" transform="rotate(-45 982.86 814.80)">14</text>
<text x="1002.49" y="814.80" text-anchor="end" font-size="8.5" fill="#595959" transform="rotate(-45 1002.49 814.80)">18</text>
<text x="1022.12" y="814.80" text-anchor="end" font-size="8.5" fill="#595959" transform="rotate(-45 1022.12 814.80)">22</text>
<text x="1041.75" y="814.80" text-anchor="end" font-size="8.5" fill="#595959" transform="rotate(-45 1041.75 814.80)">26</text>
<text x="1061.38" y="814.80" text-anchor="end" font-size="8.5" fill="#595959" transform="rotate(-45 1061.38 814.80)">01 Mar</text>
<text x="1081.02" y="814.80" text-anchor="end" font-size="8.5" fill="#595959" transform="rotate(-45 1081.02 814.80)">05</text>
<text x="1100.65" y="814.80" text-anchor="end" font-size="8.5" fill="#595959" transform="rotate(-45 1100.65 814.80)">09</text>
<text x="1120.28" y="814.80" text-anchor="end" font-size="8.5" fill="#595959" transform="rotate(-45 1120.28 814.80)">13</text>
<text x="1139.91" y="814.80" text-anchor="end" font-size="8.5" fill="#595959" transform="rotate(-45 1139.91 814.80)">17</text>
<text x="1159.54" y="814.80" text-anchor="end" font-size="8.5" fill="#595959" transform="rotate(-45 1159.54 814.80)">21</text>
<text x="1179.18" y="814.80" text-anchor="end" font-size="8.5" fill="#595959" transform="rotate(-45 1179.18 814.80)">25</text>
<text x="1198.81" y="814.80" text-anchor="end" font-size="8.5" fill="#595959" transform="rotate(-45 1198.81 814.80)">29</text>
<text x="1218.44" y="814.80" text-anchor="end" font-size="8.5" fill="#595959" transform="rotate(-45 1218.44 814.80)">02</text>
<text x="1238.07" y="814.80" text-anchor="end" font-size="8.5" fill="#595959" transform="rotate(-45 1238.07 814.80)">06</text>
<text x="1257.70" y="814.80" text-anchor="end" font-size="8.5" fill="#595959" transform="rotate(-45 1257.70 814.80)">10</text>
<text x="1277.34" y="814.80" text-anchor="end" font-size="8.5" fill="#595959" transform="rotate(-45 1277.34 814.80)">14</text>
<text x="1296.97" y="814.80" text-anchor="end" font-size="8.5" fill="#595959" transform="rotate(-45 1296.97 814.80)">18</text>
<text x="1316.60" y="814.80" text-anchor="end" font-size="8.5" fill="#595959" transform="rotate(-45 1316.60 814.80)">22</text>
<text x="1336.23" y="814.80" text-anchor="end" font-size="8.5" fill="#595959" transform="rotate(-45 1336.23 814.80)">26</text>
</svg>
<!-- /CHARTS -->
</body></html>
